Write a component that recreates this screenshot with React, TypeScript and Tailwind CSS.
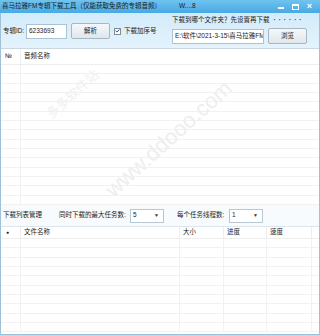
import { Check } from 'lucide-react';

const LIST_ROWS = Array.from({ length: 15 }, (_, i) => i);
const TASK_ROWS = Array.from({ length: 10 }, (_, i) => i);

const TASK_COLUMNS = [
  { label: '●', width: 'w-[20px]', text: 'pl-[5px] text-[5px]' },
  { label: '文件名称', width: 'w-[159px]', text: 'pl-[3px]' },
  { label: '大小', width: 'w-[44px]', text: 'pl-[3px]' },
  { label: '进度', width: 'w-[43px]', text: 'pl-[3px]' },
  { label: '速度', width: 'w-[45px]', text: 'pl-[3px]' },
];

function Select({ value }: { value: string }) {
  return (
    <div className="flex h-[14px] w-[34px] items-center justify-between border border-[#b7c8d4] bg-white pl-[2px] pr-[4px]">
      <span>{value}</span>
      <span className="text-[5px] text-[#333]">▼</span>
    </div>
  );
}

export default function App() {
  return (
    <div className="relative flex h-[335px] w-[320px] flex-col overflow-hidden bg-white font-['Liberation_Sans','Noto_Sans_CJK_SC',sans-serif] text-[6.5px] leading-none text-[#1b1b1b]">
      {/* 标题栏 */}
      <div className="flex h-[13px] shrink-0 items-center bg-gradient-to-b from-[#6fc3f0] to-[#48a9e4] pl-[2px]">
        <span className="w-[177px]">喜马拉雅FM专辑下载工具（仅能获取免费的专辑音频）</span>
        <span>W....8</span>
        <div className="ml-auto flex items-center gap-[8px] pr-[8px] text-white">
          <span className="mt-[3px] block h-[1.5px] w-[6px] bg-white" />
          <span className="block h-[6px] w-[7px] border border-t-2 border-white" />
          <span className="text-[9px] font-bold leading-none">×</span>
        </div>
      </div>

      <div className="flex min-h-0 flex-1 flex-col border-x border-b border-[#9fc2d8]">
        {/* 工具栏 */}
        <div className="flex h-[35px] shrink-0 bg-gradient-to-b from-[#d3ebfa] to-[#e4f3fc] pl-[2px]">
          <div className="mt-[10px] flex h-[16px] w-[169px] items-center">
            <span className="w-[23px]">专辑ID:</span>
            <div className="flex h-[15px] w-[41px] items-center border border-[#a9c3d5] bg-white pl-[2px]">6233693</div>
            <button className="ml-[4px] h-[16px] w-[39px] rounded-[2px] border border-[#a8b6c2] bg-gradient-to-b from-[#f5f8fa] to-[#dfe7ed]">
              解析
            </button>
            <div className="ml-[4px] flex h-[7px] w-[7px] items-center justify-center border border-[#7d8d99] bg-white">
              <Check className="h-[6px] w-[6px]" strokeWidth={4} />
            </div>
            <span className="ml-[3px]">下载加序号</span>
          </div>
          <div className="flex flex-col">
            <div className="mt-[3px] flex h-[8px] items-center gap-[4px]">
              <span>下载到哪个文件夹？先设置再下载</span>
              <span className="font-bold tracking-[3px] text-[#333]">······</span>
            </div>
            <div className="mt-[4px] flex items-center">
              <div className="flex h-[15px] w-[92px] items-center overflow-hidden whitespace-nowrap border border-[#a9c3d5] bg-white pl-[2px]">
                E:\软件\2021-3-15\喜马拉雅FM专
              </div>
              <button className="ml-[4px] h-[16px] w-[39px] rounded-[2px] border border-[#a8b6c2] bg-gradient-to-b from-[#f5f8fa] to-[#dfe7ed]">
                浏览
              </button>
            </div>
          </div>
        </div>

        {/* 音频列表 */}
        <div className="flex h-[157px] shrink-0 flex-col border-t border-[#c9d7e1] bg-white">
          <div className="flex h-[16px] shrink-0 items-center border-b border-[#eeeeee]">
            <span className="flex h-full w-[20px] items-center border-r border-[#eeeeee] pl-[4px]">№</span>
            <span className="pl-[3px]">音频名称</span>
          </div>
          {LIST_ROWS.map((i) => (
            <div key={i} className="flex h-[9.33px] shrink-0 border-b border-[#f1f1f1]">
              <span className="h-full w-[20px] border-r border-[#f1f1f1]" />
            </div>
          ))}
        </div>

        {/* 下载列表管理 */}
        <div className="flex h-[21px] shrink-0 items-center bg-[#f8fbfd] pl-[2px]">
          <span className="w-[56px]">下载列表管理</span>
          <span className="w-[71px]">同时下载的最大任务数:</span>
          <Select value="5" />
          <span className="ml-[13px] w-[52px]">每个任务线程数:</span>
          <Select value="1" />
        </div>

        {/* 任务列表 */}
        <div className="flex min-h-0 flex-1 flex-col border-t border-[#dde6ec] bg-white">
          <div className="flex h-[12px] shrink-0 items-center border-b border-[#eeeeee]">
            {TASK_COLUMNS.map((c) => (
              <span key={c.label} className={`flex h-full items-center border-r border-[#eeeeee] ${c.width} ${c.text}`}>
                {c.label}
              </span>
            ))}
          </div>
          {TASK_ROWS.map((i) => (
            <div key={i} className="flex h-[9.33px] shrink-0 border-b border-[#f1f1f1]">
              {TASK_COLUMNS.map((c) => (
                <span key={c.label} className={`h-full border-r border-[#f1f1f1] ${c.width}`} />
              ))}
            </div>
          ))}
        </div>
      </div>

      {/* 水印 */}
      <span className="pointer-events-none absolute left-[88px] top-[128px] -rotate-[42deg] whitespace-nowrap text-[22px] text-[#eeeeee]">
        www.ddooo.com
      </span>
      <span className="pointer-events-none absolute left-[40px] top-[88px] -rotate-[42deg] whitespace-nowrap text-[13px] text-[#f0f0f0]">
        多多软件站
      </span>
    </div>
  );
}
